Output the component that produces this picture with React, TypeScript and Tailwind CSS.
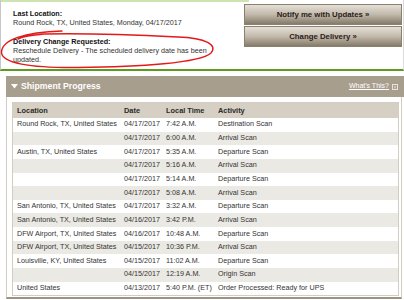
import React from "react";

type Row = { loc: string; date: string; time: string; activity: string };

const rows: Row[] = [
  { loc: "Round Rock, TX, United States", date: "04/17/2017", time: "7:42 A.M.", activity: "Destination Scan" },
  { loc: "", date: "04/17/2017", time: "6:00 A.M.", activity: "Arrival Scan" },
  { loc: "Austin, TX, United States", date: "04/17/2017", time: "5:35 A.M.", activity: "Departure Scan" },
  { loc: "", date: "04/17/2017", time: "5:16 A.M.", activity: "Arrival Scan" },
  { loc: "", date: "04/17/2017", time: "5:14 A.M.", activity: "Departure Scan" },
  { loc: "", date: "04/17/2017", time: "5:08 A.M.", activity: "Arrival Scan" },
  { loc: "San Antonio, TX, United States", date: "04/17/2017", time: "3:32 A.M.", activity: "Departure Scan" },
  { loc: "San Antonio, TX, United States", date: "04/16/2017", time: "3:42 P.M.", activity: "Arrival Scan" },
  { loc: "DFW Airport, TX, United States", date: "04/16/2017", time: "10:48 A.M.", activity: "Departure Scan" },
  { loc: "DFW Airport, TX, United States", date: "04/15/2017", time: "10:36 P.M.", activity: "Arrival Scan" },
  { loc: "Louisville, KY, United States", date: "04/15/2017", time: "11:02 A.M.", activity: "Departure Scan" },
  { loc: "", date: "04/15/2017", time: "12:19 A.M.", activity: "Origin Scan" },
  { loc: "United States", date: "04/13/2017", time: "5:40 P.M. (ET)", activity: "Order Processed: Ready for UPS" },
];

const cols = "grid grid-cols-[107px_42px_52px_1fr]";

const UpsButton = ({ label }: { label: string }) => (
  <button className="h-[21px] w-full border border-[#8a806f] bg-gradient-to-b from-[#e4dfd7] via-[#c2b9ab] to-[#867b6a] text-[7.8px] font-bold text-[#2a2118]">
    {label}
  </button>
);

export default function App() {
  return (
    <div className="relative h-[300px] w-[404px] overflow-hidden bg-white font-['Liberation_Sans',Arial,sans-serif] text-[7.2px] text-[#333]">
      {/* tracking summary */}
      <div className="h-[71px] border-b-2 border-l border-r border-b-[#5d9a20] border-l-[#c8c8c8] border-r-[#dcdcdc]">
        <div className="h-[2px] w-[248px] bg-[#cfe2b3]" />
        <div className="flex">
          <div className="flex-1 pl-[12px] pt-[7px] leading-[9.3px]">
            <div className="font-bold text-[#111]">Last Location:</div>
            <div>Round Rock, TX, United States, Monday, 04/17/2017</div>
            <div className="mt-[9px] font-bold text-[#111]">Delivery Change Requested:</div>
            <div className="w-[205px]">Reschedule Delivery - The scheduled delivery date has been updated.</div>
          </div>
          <div className="mr-[1px] mt-[2px] flex w-[158px] flex-col gap-[1px]">
            <UpsButton label="Notify me with Updates »" />
            <UpsButton label="Change Delivery »" />
          </div>
        </div>
      </div>

      {/* shipment progress */}
      <div className="ml-[6px] mt-[5px]">
        <div className="flex h-[21px] items-center bg-[#a89e8e] pl-[5px] pr-[6px] text-white">
          <svg width="7" height="5" viewBox="0 0 7 5" className="mr-[3px]">
            <path d="M0 0 H7 L3.5 4.5 Z" fill="#fff" />
          </svg>
          <span className="text-[8.7px] font-bold">Shipment Progress</span>
          <span className="ml-auto text-[7px] underline">What's This?</span>
          <svg width="6" height="6" viewBox="0 0 6 6" className="ml-[3px]">
            <rect x="0.5" y="0.5" width="5" height="5" fill="none" stroke="#e8e4dc" strokeWidth="1" />
            <path d="M3 1.8 V4.4" stroke="#e8e4dc" strokeWidth="1" />
          </svg>
        </div>
        <div className="mr-[2px] border-b-2 border-l border-r border-b-[#9c9385] border-l-[#d3ccc0] border-r-[#d3ccc0] pb-[1px] pl-[5px] pr-[2px] pt-[5px]">
          <div className="border border-[#d3ccc0]">
            <div className={`${cols} h-[15px] items-center bg-[#d6cfc3] font-bold text-[7.4px] text-[#2b2b2b]`}>
              <div className="pl-[4px]">Location</div>
              <div className="pl-[4px]">Date</div>
              <div className="pl-[4px]">Local Time</div>
              <div className="pl-[4px]">Activity</div>
            </div>
            {rows.map((r, i) => (
              <div
                key={i}
                className={`${cols} h-[13.65px] items-center whitespace-nowrap ${i % 2 === 1 ? "bg-[#ebe9e3]" : "bg-white"}`}
              >
                <div className="pl-[4px]">{r.loc}</div>
                <div className="pl-[4px]">{r.date}</div>
                <div className="pl-[4px]">{r.time}</div>
                <div className="pl-[4px]">{r.activity}</div>
              </div>
            ))}
          </div>
        </div>
      </div>

      {/* hand-drawn annotation */}
      <svg className="pointer-events-none absolute left-0 top-0" width="404" height="300" viewBox="0 0 404 300">
        <path
          d="M62 31 C24 32 2 40 1.5 52 C1 63 30 68 78 67.5 C140 67 200 63 211 53 C218 45 206 38 178 37 C138 35 86 33 44 34 C32 35 22 37 18 39"
          fill="none"
          stroke="#e21a1a"
          strokeWidth="1.4"
          strokeLinecap="round"
        />
      </svg>
    </div>
  );
}
